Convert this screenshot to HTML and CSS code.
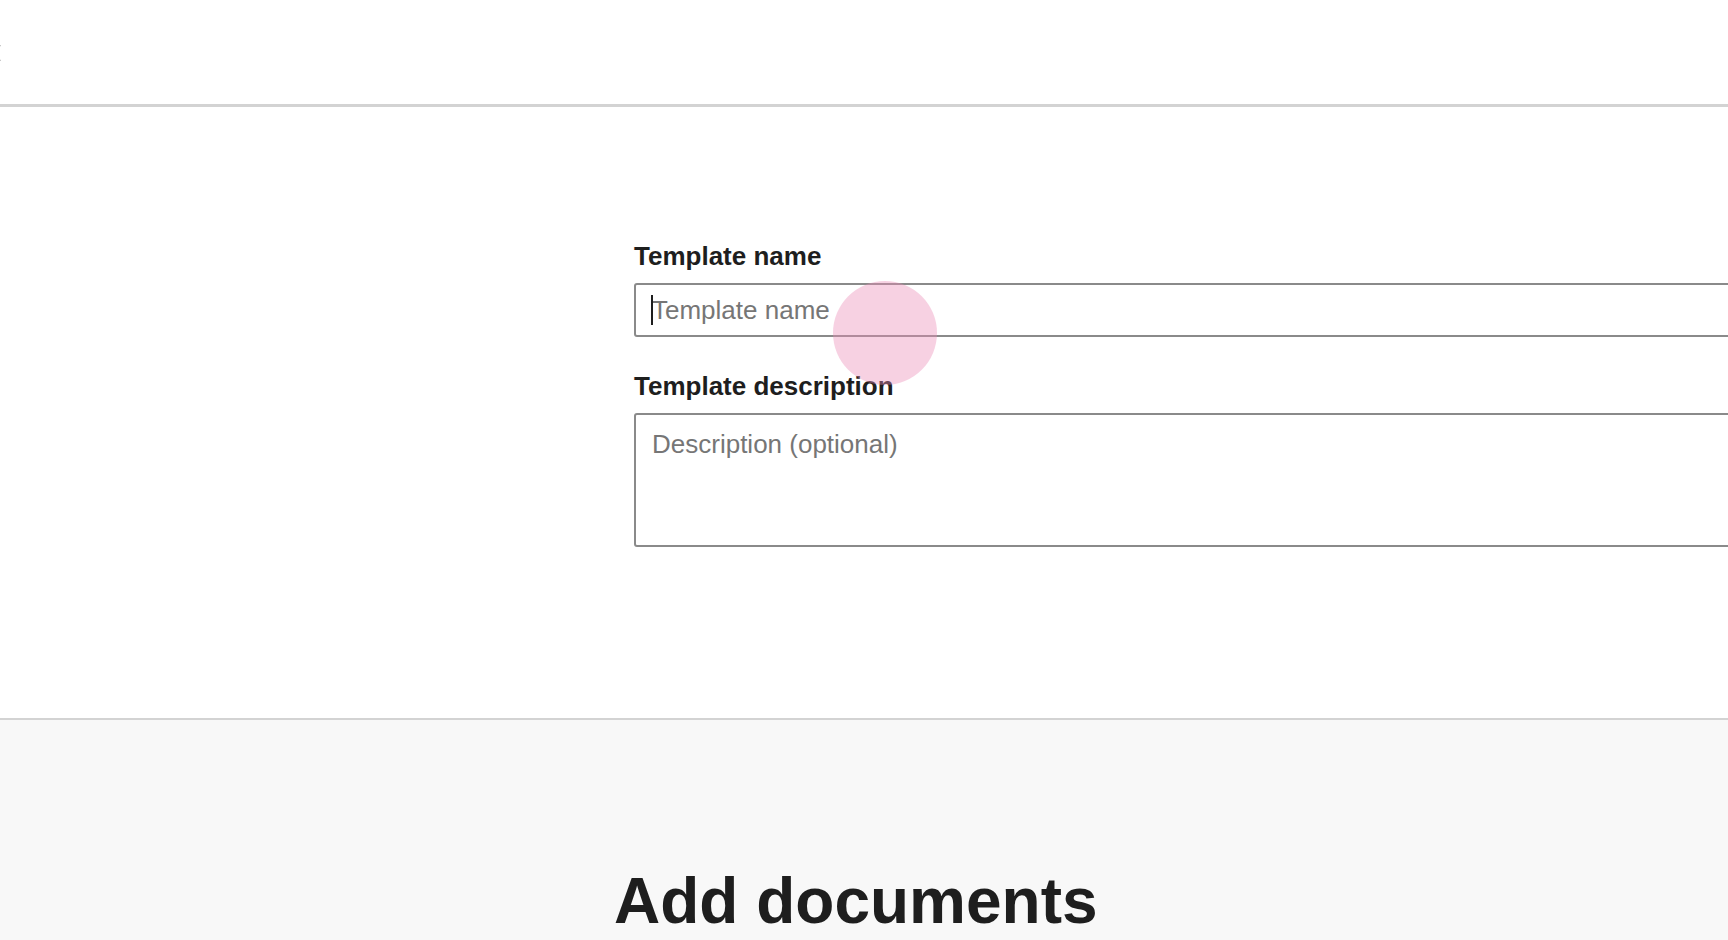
FILE: index.html
```html
<!DOCTYPE html>
<html lang="en">
<head>
<meta charset="utf-8">
<title>Template</title>
<link rel="stylesheet" href="styles.css">
</head>
<body>
<header class="top-bar">
  <button class="close-btn" aria-label="Close">
    <svg width="20" height="20" viewBox="0 0 20 20"><path d="M2 2 L18 18 M18 2 L2 18" stroke="#7a7a7a" stroke-width="2" fill="none"/></svg>
  </button>
</header>
<main>
  <section class="details">
    <form class="form">
      <label class="field-label" for="tname">Template name</label>
      <div class="input-wrap">
        <input id="tname" class="text-input" type="text" placeholder="Template name">
        <span class="caret"></span>
        <span class="touch"></span>
      </div>
      <label class="field-label desc-label" for="tdesc">Template description</label>
      <textarea id="tdesc" class="text-area" placeholder="Description (optional)"></textarea>
    </form>
  </section>
  <section class="docs">
    <h1 class="docs-title">Add documents</h1>
  </section>
</main>
</body>
</html>
```
FILE: styles.css
```css
html, body {
  margin: 0;
  padding: 0;
  overflow: hidden;
  background: #ffffff;
  font-family: "Liberation Sans", Arial, Helvetica, sans-serif;
  color: #1e1e1e;
}

.top-bar {
  height: 104px;
  border-bottom: 3px solid #d3d3d3;
  display: flex;
  align-items: center;
}

.close-btn {
  margin-left: -18px;
  padding: 0;
  border: 0;
  background: none;
  display: flex;
  margin-top: 2px;
}

.details {
  padding: 134px 0 171px 634px;
}

.form {
  width: 1300px;
  display: flex;
  flex-direction: column;
}

.field-label {
  font-size: 26px;
  line-height: 30px;
  font-weight: bold;
  color: #1e1e1e;
  margin-bottom: 12px;
}

.desc-label {
  margin-top: 34px;
}

.input-wrap {
  position: relative;
}

.text-input,
.text-area {
  box-sizing: border-box;
  width: 100%;
  border: 2px solid #8a8a8a;
  border-radius: 3px;
  font-family: "Liberation Sans", Arial, Helvetica, sans-serif;
  font-size: 26px;
  color: #1e1e1e;
  background: #fff;
  outline: none;
  margin: 0;
}

.text-input {
  height: 54px;
  padding: 0 16px;
}

.text-area {
  height: 134px;
  padding: 14px 16px;
  resize: none;
  line-height: 30px;
  display: block;
}

.text-input::placeholder,
.text-area::placeholder {
  color: #767676;
  opacity: 1;
}

.caret {
  position: absolute;
  left: 17px;
  top: 12px;
  width: 2px;
  height: 30px;
  background: #1e1e1e;
}

.touch {
  position: absolute;
  left: 199px;
  top: -2px;
  width: 104px;
  height: 104px;
  border-radius: 50%;
  background: rgba(234, 140, 182, 0.4);
  pointer-events: none;
}

.docs {
  border-top: 2px solid #d3d3d3;
  background: #f8f8f8;
  padding: 143px 0 0 614px;
  height: 400px;
}

.docs-title {
  margin: 0;
  font-size: 64px;
  line-height: 76px;
  font-weight: bold;
  color: #1e1e1e;
}
```
